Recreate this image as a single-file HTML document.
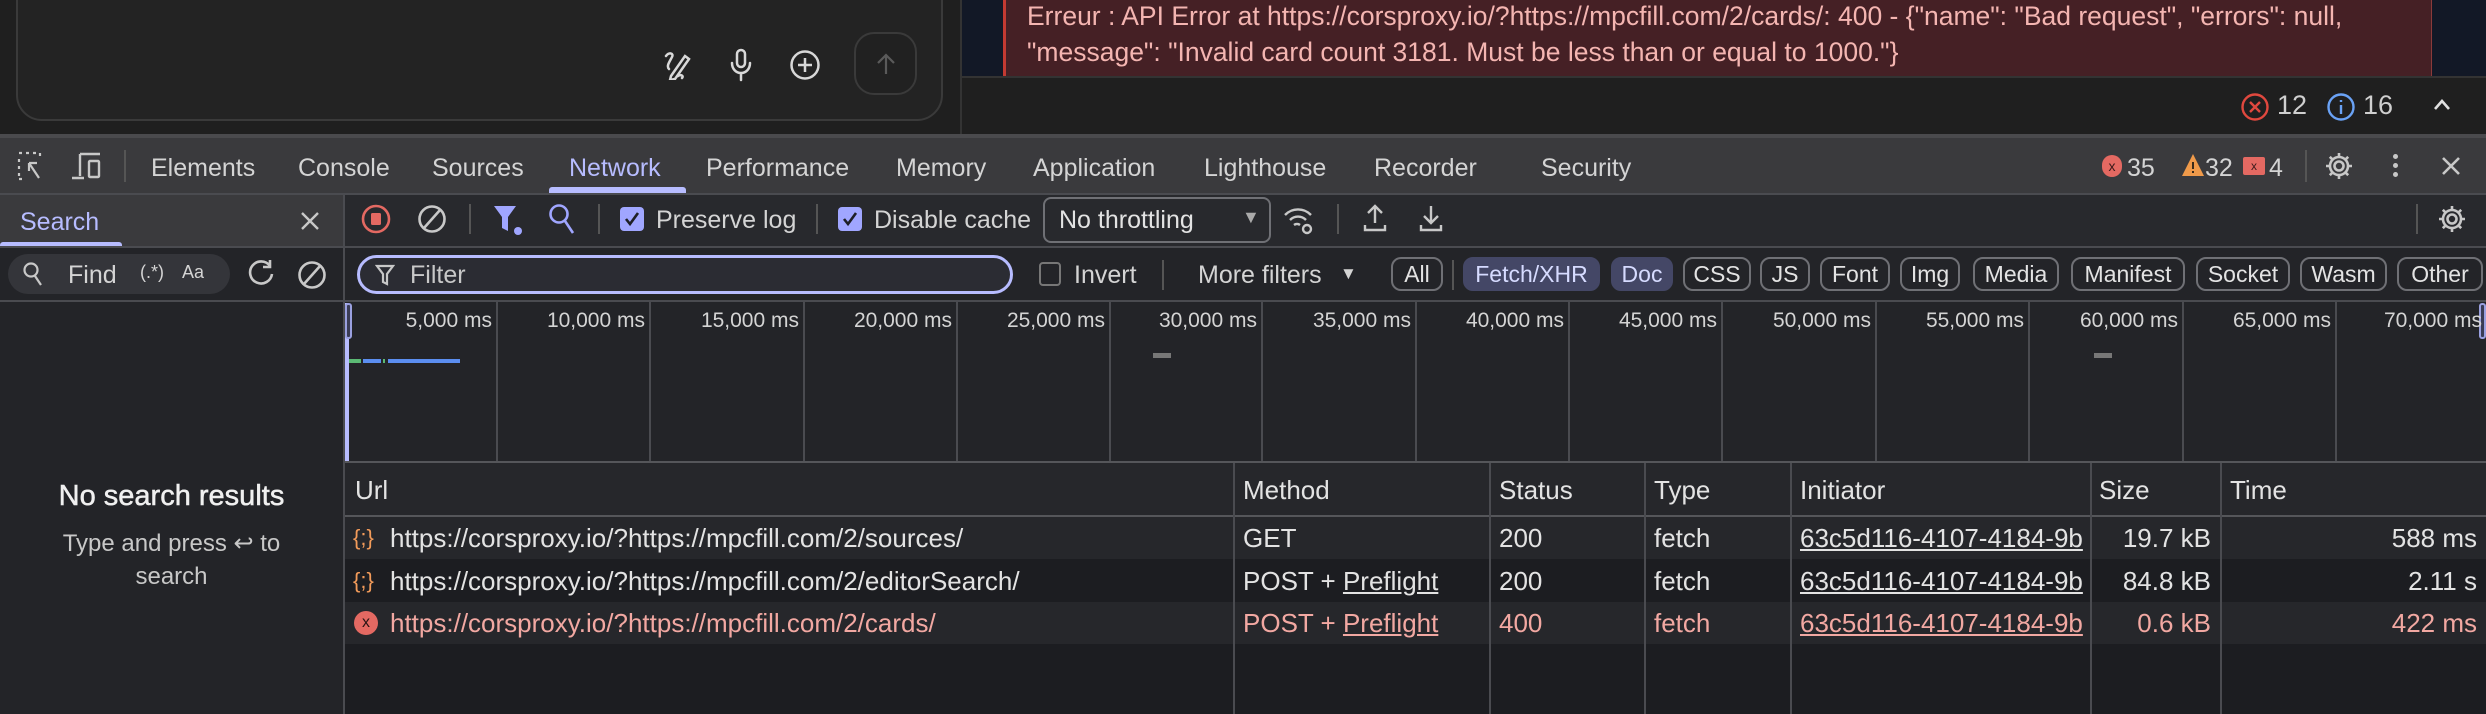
<!DOCTYPE html>
<html><head><meta charset="utf-8"><style>
*{box-sizing:border-box;margin:0;padding:0}
body{width:2486px;height:714px;overflow:hidden;background:#1f1f1f;font-family:"Liberation Sans",sans-serif;color:#e3e3e3;position:relative}
.a{position:absolute;white-space:nowrap}
.t{font-size:25px;line-height:28px}
.chip{position:absolute;top:257px;height:34px;border:2px solid #6f7075;border-radius:10px;font-size:23px;line-height:30px;text-align:center;color:#e3e3e3}
.chip.on{background:#444766;border-color:#444766;color:#d6dbff}
.vl{position:absolute;width:2px;background:#4a4b50}
.row{position:absolute;left:345px;width:2141px;height:42px}
.c{position:absolute;font-size:26px;line-height:42px;white-space:nowrap}
</style></head><body>
<div class="a" style="left:0;top:0;width:960px;height:134px;background:#1f1f1f"></div>
<div class="a" style="left:16px;top:-30px;width:927px;height:151px;border:2px solid #3a3a3a;border-radius:0 0 26px 26px;background:#232323"></div>
<svg class="a" style="left:662px;top:48px" width="34" height="32" viewBox="0 0 34 32" fill="none" stroke="#d8d8d8" stroke-width="2.5" stroke-linecap="round"><path d="M4 8c3-4 8-3 6 1s-6 9-3 12M9 28l14-20 4 3-14 20-5 1z M16 28c3-2 6 0 4 2"/></svg>
<svg class="a" style="left:729px;top:48px" width="24" height="34" viewBox="0 0 24 34" fill="none" stroke="#d8d8d8" stroke-width="2.5" stroke-linecap="round"><rect x="8" y="2" width="8" height="17" rx="4"/><path d="M3 15c0 6 4 10 9 10s9-4 9-10M12 25v7"/></svg>
<svg class="a" style="left:789px;top:49px" width="32" height="32" viewBox="0 0 32 32" fill="none" stroke="#d8d8d8" stroke-width="2.5"><circle cx="16" cy="16" r="13.5"/><path d="M16 9v14M9 16h14"/></svg>
<div class="a" style="left:854px;top:32px;width:63px;height:63px;border:2px solid #3a3a3a;border-radius:20px;background:#212121"></div>
<svg class="a" style="left:875px;top:52px" width="22" height="24" viewBox="0 0 22 24" fill="none" stroke="#5a5a5a" stroke-width="2.2"><path d="M11 22V3M3 11l8-8 8 8"/></svg>
<div class="a" style="left:960px;top:0;width:2px;height:134px;background:#333"></div>
<div class="a" style="left:962px;top:0;width:1524px;height:76px;background:#121826"></div>
<div class="a" style="left:1003px;top:0;width:1429px;height:76px;background:#452025;border-left:3px solid #c33a32;border-right:1px solid #8b3a3a"></div>
<div class="a" style="left:962px;top:76px;width:1524px;height:2px;background:#333"></div>
<div class="a" style="left:1027px;top:-2px;font-size:26.5px;line-height:36px;color:#f4b5b1;white-space:normal;width:1400px">Erreur : API Error at https://corsproxy.io/?https://mpcfill.com/2/cards/: 400 - {"name": "Bad request", "errors": null,<br>"message": "Invalid card count 3181. Must be less than or equal to 1000."}</div>
<svg class="a" style="left:2240px;top:92px" width="30" height="30" viewBox="0 0 30 30" fill="none" stroke="#e0483e" stroke-width="2.4"><circle cx="15" cy="15" r="12.5"/><path d="M10 10l10 10M20 10l-10 10"/></svg>
<div class="a" style="left:2277px;top:90px;font-size:27px;color:#cfcfcf">12</div>
<svg class="a" style="left:2326px;top:92px" width="30" height="30" viewBox="0 0 30 30" fill="none" stroke="#6aa2f5" stroke-width="2.4"><circle cx="15" cy="15" r="12.5"/><path d="M15 13v9M15 8v2"/></svg>
<div class="a" style="left:2363px;top:90px;font-size:27px;color:#cfcfcf">16</div>
<svg class="a" style="left:2432px;top:98px" width="20" height="14" viewBox="0 0 20 14" fill="none" stroke="#e0e0e0" stroke-width="2.6"><path d="M3 11l7-8 7 8"/></svg>

<div class="a" style="left:0;top:134px;width:2486px;height:4px;background:#4a4a4d"></div>
<div class="a" style="left:0;top:138px;width:2486px;height:55px;background:#3a3a3d"></div>
<svg class="a" style="left:17px;top:151px" width="32" height="30" viewBox="0 0 32 30" fill="none" stroke="#c8c8c8" stroke-width="2.2"><path d="M2 2h3M9 2h3M16 2h3M23 2v3M2 8v3M2 15v3M2 22v3M2 28h3" /><path d="M12 12l10 15M12 12h8M12 12v8"/></svg>
<svg class="a" style="left:70px;top:151px" width="34" height="30" viewBox="0 0 34 30" fill="none" stroke="#c8c8c8" stroke-width="2.4"><path d="M10 3h20M10 3v22M2 27h12"/><rect x="19" y="10" width="10" height="16" rx="1"/></svg>
<div class="a" style="left:124px;top:150px;width:2px;height:32px;background:#555"></div>
<div class="a t" style="left:151px;top:154px;color:#d4d4d4">Elements</div>
<div class="a t" style="left:298px;top:154px;color:#d4d4d4">Console</div>
<div class="a t" style="left:432px;top:154px;color:#d4d4d4">Sources</div>
<div class="a t" style="left:569px;top:154px;color:#b7bcff">Network</div>
<div class="a" style="left:549px;top:187px;width:137px;height:6px;background:#b7bcff;border-radius:3px 3px 0 0"></div>
<div class="a t" style="left:706px;top:154px;color:#d4d4d4">Performance</div>
<div class="a t" style="left:896px;top:154px;color:#d4d4d4">Memory</div>
<div class="a t" style="left:1033px;top:154px;color:#d4d4d4">Application</div>
<div class="a t" style="left:1204px;top:154px;color:#d4d4d4">Lighthouse</div>
<div class="a t" style="left:1374px;top:154px;color:#d4d4d4">Recorder</div>
<div class="a t" style="left:1541px;top:154px;color:#d4d4d4">Security</div>
<div class="a" style="left:2102px;top:155px;width:20px;height:22px;border-radius:11px;background:#e46962;color:#3a1a1a;font-size:14px;line-height:22px;text-align:center">x</div>
<div class="a t" style="left:2127px;top:154px;color:#d4d4d4">35</div>
<svg class="a" style="left:2181px;top:153px" width="24" height="24" viewBox="0 0 24 24"><path d="M12 1L23 23H1z" fill="#f09a4a"/><path d="M12 9v7M12 18v2" stroke="#3a2a1a" stroke-width="2"/></svg>
<div class="a t" style="left:2205px;top:154px;color:#d4d4d4">32</div>
<div class="a" style="left:2243px;top:157px;width:22px;height:18px;background:#e46962;border-radius:2px;color:#3a1a1a;font-size:12px;line-height:18px;text-align:center">x</div>
<div class="a t" style="left:2269px;top:154px;color:#d4d4d4">4</div>
<div class="a" style="left:2305px;top:150px;width:2px;height:32px;background:#555"></div>
<svg class="a" style="left:2324px;top:151px" width="30" height="30" viewBox="0 0 30 30" fill="none" stroke="#c8c8c8" stroke-width="2.6"><circle cx="15" cy="15" r="4.5"/><path d="M15 2v4M15 24v4M2 15h4M24 15h4M5.8 5.8l2.8 2.8M21.4 21.4l2.8 2.8M5.8 24.2l2.8-2.8M21.4 8.6l2.8-2.8"/><circle cx="15" cy="15" r="9"/></svg>
<div class="a" style="left:2393px;top:154px;width:5px;height:5px;border-radius:3px;background:#c8c8c8;box-shadow:0 9px 0 #c8c8c8,0 18px 0 #c8c8c8"></div>
<svg class="a" style="left:2440px;top:155px" width="22" height="22" viewBox="0 0 22 22" stroke="#c8c8c8" stroke-width="2.6"><path d="M3 3l16 16M19 3L3 19"/></svg>

<div class="a" style="left:0;top:193px;width:2486px;height:2px;background:#4a4b50"></div>
<div class="a" style="left:0;top:195px;width:343px;height:51px;background:#3a3a3d"></div>
<div class="a t" style="left:20px;top:208px;color:#b7bcff">Search</div>
<div class="a" style="left:0;top:242px;width:122px;height:4px;background:#b7bcff;border-radius:3px 3px 0 0"></div>
<svg class="a" style="left:299px;top:210px" width="22" height="22" viewBox="0 0 22 22" stroke="#c8c8c8" stroke-width="2.4"><path d="M3 3l16 16M19 3L3 19"/></svg>
<div class="a" style="left:343px;top:193px;width:2px;height:521px;background:#4a4b50"></div>
<div class="a" style="left:345px;top:195px;width:2141px;height:51px;background:#28292d"></div>
<svg class="a" style="left:360px;top:203px" width="32" height="32" viewBox="0 0 32 32"><circle cx="16" cy="16" r="13" fill="none" stroke="#e46962" stroke-width="2.6"/><rect x="11" y="10" width="10" height="12" rx="1.5" fill="#e46962"/></svg>
<svg class="a" style="left:416px;top:203px" width="32" height="32" viewBox="0 0 32 32" fill="none" stroke="#c8c8c8" stroke-width="2.6"><circle cx="16" cy="16" r="12.5"/><path d="M24 7L8 25"/></svg>
<div class="a" style="left:469px;top:204px;width:2px;height:30px;background:#555"></div>
<svg class="a" style="left:492px;top:203px" width="32" height="34" viewBox="0 0 32 34"><path d="M2 3h22l-8 11v14l-6-3V14z" fill="#a0a6ff"/><circle cx="26" cy="28" r="4" fill="#a0a6ff"/></svg>
<svg class="a" style="left:547px;top:202px" width="30" height="34" viewBox="0 0 30 34" fill="none" stroke="#a0a6ff" stroke-width="2.6"><circle cx="12" cy="12" r="8.5"/><path d="M18 19l8 12"/></svg>
<div class="a" style="left:598px;top:204px;width:2px;height:30px;background:#555"></div>
<div class="a" style="left:620px;top:207px;width:24px;height:24px;border-radius:4px;background:#a0a6ff"></div>
<svg class="a" style="left:622px;top:209px" width="20" height="20" viewBox="0 0 20 20" fill="none" stroke="#1e1f26" stroke-width="2.6"><path d="M4 10l4 5 8-11"/></svg>
<div class="a t" style="left:656px;top:206px;color:#d4d4d4">Preserve log</div>
<div class="a" style="left:816px;top:204px;width:2px;height:30px;background:#555"></div>
<div class="a" style="left:838px;top:207px;width:24px;height:24px;border-radius:4px;background:#a0a6ff"></div>
<svg class="a" style="left:840px;top:209px" width="20" height="20" viewBox="0 0 20 20" fill="none" stroke="#1e1f26" stroke-width="2.6"><path d="M4 10l4 5 8-11"/></svg>
<div class="a t" style="left:874px;top:206px;color:#d4d4d4">Disable cache</div>
<div class="a" style="left:1043px;top:197px;width:228px;height:46px;border:2px solid #6f7075;border-radius:8px"></div>
<div class="a t" style="left:1059px;top:206px;color:#e3e3e3">No throttling</div>
<div class="a" style="left:1242px;top:207px;font-size:18px;color:#aaa">▼</div>
<svg class="a" style="left:1282px;top:203px" width="34" height="34" viewBox="0 0 34 34" fill="none" stroke="#c8c8c8" stroke-width="2.4"><path d="M3 12a18 18 0 0 1 26 0M8 17a11 11 0 0 1 16 0M12 22a5 5 0 0 1 6 0"/><circle cx="25" cy="26" r="4"/></svg>
<div class="a" style="left:1337px;top:204px;width:2px;height:30px;background:#555"></div>
<svg class="a" style="left:1362px;top:203px" width="26" height="30" viewBox="0 0 26 30" fill="none" stroke="#c8c8c8" stroke-width="2.4"><path d="M13 20V3M6 10l7-7 7 7M3 22v5h20v-5"/></svg>
<svg class="a" style="left:1418px;top:203px" width="26" height="30" viewBox="0 0 26 30" fill="none" stroke="#c8c8c8" stroke-width="2.4"><path d="M13 3v17M6 13l7 7 7-7M3 22v5h20v-5"/></svg>
<div class="a" style="left:2416px;top:204px;width:2px;height:30px;background:#555"></div>
<svg class="a" style="left:2437px;top:204px" width="30" height="30" viewBox="0 0 30 30" fill="none" stroke="#c8c8c8" stroke-width="2.6"><circle cx="15" cy="15" r="4.5"/><path d="M15 2v4M15 24v4M2 15h4M24 15h4M5.8 5.8l2.8 2.8M21.4 21.4l2.8 2.8M5.8 24.2l2.8-2.8M21.4 8.6l2.8-2.8"/><circle cx="15" cy="15" r="9"/></svg>

<div class="a" style="left:0;top:246px;width:2486px;height:2px;background:#4a4b50"></div>
<div class="a" style="left:0;top:248px;width:343px;height:52px;background:#232428"></div>
<div class="a" style="left:345px;top:248px;width:2141px;height:52px;background:#232428"></div>
<div class="a" style="left:8px;top:254px;width:222px;height:40px;border-radius:20px;background:#34353a"></div>
<svg class="a" style="left:22px;top:261px" width="22" height="26" viewBox="0 0 22 26" fill="none" stroke="#c8c8c8" stroke-width="2.2"><circle cx="9" cy="9" r="6.5"/><path d="M13 15l6 9"/></svg>
<div class="a t" style="left:68px;top:261px;color:#d4d4d4">Find</div>
<div class="a" style="left:140px;top:262px;font-size:18px;color:#d4d4d4">(.*)</div>
<div class="a" style="left:182px;top:262px;font-size:18px;color:#d4d4d4">Aa</div>
<svg class="a" style="left:246px;top:258px" width="30" height="32" viewBox="0 0 30 32" fill="none" stroke="#c8c8c8" stroke-width="2.6"><path d="M24 8a11 11 0 1 0 2 8M24 2v7h-7"/></svg>
<svg class="a" style="left:296px;top:259px" width="32" height="32" viewBox="0 0 32 32" fill="none" stroke="#c8c8c8" stroke-width="2.6"><circle cx="16" cy="16" r="12.5"/><path d="M24 7L8 25"/></svg>
<div class="a" style="left:357px;top:255px;width:656px;height:39px;border:3px solid #b7bcff;border-radius:20px;background:#2b2c33"></div>
<svg class="a" style="left:375px;top:263px" width="20" height="24" viewBox="0 0 20 24" fill="none" stroke="#c8c8c8" stroke-width="2.2"><path d="M2 3h16l-6 8v10l-4-2v-8z"/></svg>
<div class="a t" style="left:410px;top:261px;color:#c8c8c8">Filter</div>
<div class="a" style="left:1039px;top:262px;width:22px;height:24px;border:2px solid #777;border-radius:4px"></div>
<div class="a t" style="left:1074px;top:261px;color:#d4d4d4">Invert</div>
<div class="a" style="left:1162px;top:260px;width:2px;height:30px;background:#555"></div>
<div class="a t" style="left:1198px;top:261px;color:#d4d4d4">More filters</div>
<div class="a" style="left:1340px;top:264px;font-size:17px;color:#d4d4d4">▼</div>
<div class="chip" style="left:1391px;width:52px">All</div>
<div class="a" style="left:1452px;top:260px;width:2px;height:30px;background:#555"></div>
<div class="chip on" style="left:1463px;width:137px">Fetch/XHR</div>
<div class="chip on" style="left:1611px;width:62px">Doc</div>
<div class="chip" style="left:1683px;width:68px">CSS</div>
<div class="chip" style="left:1760px;width:50px">JS</div>
<div class="chip" style="left:1820px;width:70px">Font</div>
<div class="chip" style="left:1900px;width:60px">Img</div>
<div class="chip" style="left:1973px;width:86px">Media</div>
<div class="chip" style="left:2071px;width:114px">Manifest</div>
<div class="chip" style="left:2196px;width:94px">Socket</div>
<div class="chip" style="left:2300px;width:87px">Wasm</div>
<div class="chip" style="left:2397px;width:86px">Other</div>

<div class="a" style="left:0;top:300px;width:343px;height:414px;background:#232428"></div>
<div class="a" style="left:0;top:300px;width:2486px;height:2px;background:#4a4b50"></div>
<div class="a" style="left:0;top:480px;width:343px;text-align:center;font-size:29px;color:#f0f0f0;-webkit-text-stroke:0.5px #f0f0f0">No search results</div>
<div class="a" style="left:0;top:527px;width:343px;text-align:center;font-size:24px;line-height:33px;color:#c8c8c8;white-space:normal">Type and press ↩ to<br>search</div>

<div class="a" style="left:345px;top:302px;width:2141px;height:160px;background:#232428"></div>
<div class="a" style="left:345px;top:303px;width:4px;height:158px;background:#b7bcff"></div>
<div class="a" style="left:345px;top:303px;width:7px;height:36px;border:2px solid #9aa0e0;border-radius:3px;background:#3a3c55"></div>
<div class="a" style="left:2479px;top:303px;width:7px;height:36px;border:2px solid #9aa0e0;border-radius:3px;background:#3a3c55"></div>
<div class="a" style="left:349px;top:359px;width:12px;height:4px;background:#5bb974"></div>
<div class="a" style="left:363px;top:359px;width:18px;height:4px;background:#5b8ef0"></div>
<div class="a" style="left:383px;top:359px;width:2px;height:4px;background:#5bb974"></div>
<div class="a" style="left:388px;top:359px;width:72px;height:4px;background:#5b8ef0"></div>
<div class="a" style="left:1153px;top:353px;width:18px;height:5px;background:#777"></div>
<div class="a" style="left:2094px;top:353px;width:18px;height:5px;background:#777"></div>
<div class="vl" style="left:496px;top:302px;height:160px"></div>
<div class="vl" style="left:649px;top:302px;height:160px"></div>
<div class="vl" style="left:803px;top:302px;height:160px"></div>
<div class="vl" style="left:956px;top:302px;height:160px"></div>
<div class="vl" style="left:1109px;top:302px;height:160px"></div>
<div class="vl" style="left:1261px;top:302px;height:160px"></div>
<div class="vl" style="left:1415px;top:302px;height:160px"></div>
<div class="vl" style="left:1568px;top:302px;height:160px"></div>
<div class="vl" style="left:1721px;top:302px;height:160px"></div>
<div class="vl" style="left:1875px;top:302px;height:160px"></div>
<div class="vl" style="left:2028px;top:302px;height:160px"></div>
<div class="vl" style="left:2182px;top:302px;height:160px"></div>
<div class="vl" style="left:2335px;top:302px;height:160px"></div>
<div style="position:absolute;top:309px;left:0;font-size:21px;color:#d4d4d4">
<span class="a" style="right:-492px">5,000 ms</span>
<span class="a" style="right:-645px">10,000 ms</span>
<span class="a" style="right:-799px">15,000 ms</span>
<span class="a" style="right:-952px">20,000 ms</span>
<span class="a" style="right:-1105px">25,000 ms</span>
<span class="a" style="right:-1257px">30,000 ms</span>
<span class="a" style="right:-1411px">35,000 ms</span>
<span class="a" style="right:-1564px">40,000 ms</span>
<span class="a" style="right:-1717px">45,000 ms</span>
<span class="a" style="right:-1871px">50,000 ms</span>
<span class="a" style="right:-2024px">55,000 ms</span>
<span class="a" style="right:-2178px">60,000 ms</span>
<span class="a" style="right:-2331px">65,000 ms</span>
<span class="a" style="right:-2482px">70,000 ms</span>
</div>

<div class="a" style="left:345px;top:461px;width:2141px;height:2px;background:#55565a"></div>
<div class="a" style="left:345px;top:463px;width:2141px;height:53px;background:#26272b"></div>
<div class="a" style="left:345px;top:515px;width:2141px;height:2px;background:#55565a"></div>
<div class="a" style="left:345px;top:517px;width:2141px;height:197px;background:#1c1d21"></div>
<div class="row" style="top:517px;background:#26272b"></div>
<div class="row" style="top:560px;background:#1c1d21"></div>
<div class="row" style="top:602px;background:#26272b"></div>
<div class="vl" style="left:1233px;top:463px;height:251px"></div>
<div class="vl" style="left:1489px;top:463px;height:251px"></div>
<div class="vl" style="left:1644px;top:463px;height:251px"></div>
<div class="vl" style="left:1790px;top:463px;height:251px"></div>
<div class="vl" style="left:2090px;top:463px;height:251px"></div>
<div class="vl" style="left:2220px;top:463px;height:251px"></div>
<div class="c" style="left:355px;top:469px;color:#e3e3e3">Url</div>
<div class="c" style="left:1243px;top:469px">Method</div>
<div class="c" style="left:1499px;top:469px">Status</div>
<div class="c" style="left:1654px;top:469px">Type</div>
<div class="c" style="left:1800px;top:469px">Initiator</div>
<div class="c" style="left:2099px;top:469px">Size</div>
<div class="c" style="left:2230px;top:469px">Time</div>

<div class="c" style="left:353px;top:517px;color:#f29b5a;font-size:22px">{;}</div>
<div class="c" style="left:390px;top:517px">https://corsproxy.io/?https://mpcfill.com/2/sources/</div>
<div class="c" style="left:1243px;top:517px">GET</div>
<div class="c" style="left:1499px;top:517px">200</div>
<div class="c" style="left:1654px;top:517px">fetch</div>
<div class="c" style="left:1800px;top:517px;text-decoration:underline;width:288px;overflow:hidden">63c5d116-4107-4184-9b</div>
<div class="c" style="left:2099px;top:517px;width:112px;text-align:right">19.7 kB</div>
<div class="c" style="left:2230px;top:517px;width:247px;text-align:right">588 ms</div>

<div class="c" style="left:353px;top:560px;color:#f29b5a;font-size:22px">{;}</div>
<div class="c" style="left:390px;top:560px">https://corsproxy.io/?https://mpcfill.com/2/editorSearch/</div>
<div class="c" style="left:1243px;top:560px">POST + <u>Preflight</u></div>
<div class="c" style="left:1499px;top:560px">200</div>
<div class="c" style="left:1654px;top:560px">fetch</div>
<div class="c" style="left:1800px;top:560px;text-decoration:underline;width:288px;overflow:hidden">63c5d116-4107-4184-9b</div>
<div class="c" style="left:2099px;top:560px;width:112px;text-align:right">84.8 kB</div>
<div class="c" style="left:2230px;top:560px;width:247px;text-align:right">2.11 s</div>

<div class="a" style="left:354px;top:611px;width:24px;height:24px;border-radius:12px;background:#e46962;color:#2a1414;font-size:16px;line-height:24px;text-align:center">x</div>
<div style="color:#f2a8a2">
<div class="c" style="left:390px;top:602px">https://corsproxy.io/?https://mpcfill.com/2/cards/</div>
<div class="c" style="left:1243px;top:602px">POST + <u>Preflight</u></div>
<div class="c" style="left:1499px;top:602px">400</div>
<div class="c" style="left:1654px;top:602px">fetch</div>
<div class="c" style="left:1800px;top:602px;text-decoration:underline;width:288px;overflow:hidden">63c5d116-4107-4184-9b</div>
<div class="c" style="left:2099px;top:602px;width:112px;text-align:right">0.6 kB</div>
<div class="c" style="left:2230px;top:602px;width:247px;text-align:right">422 ms</div>
</div>
</body></html>
